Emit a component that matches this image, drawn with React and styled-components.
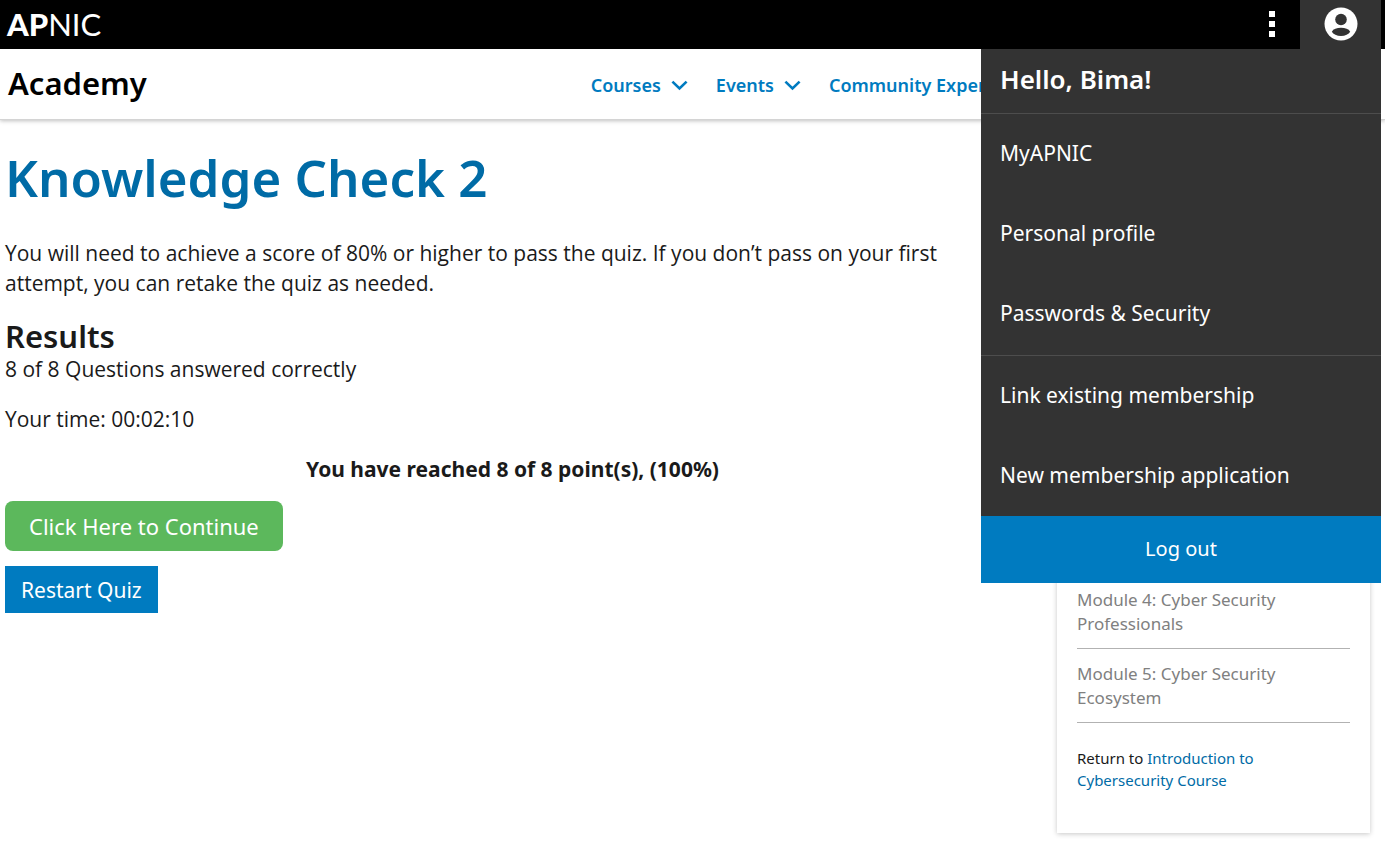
import React from "react";
import styled, { createGlobalStyle } from "styled-components";

const GlobalStyle = createGlobalStyle`
  * { box-sizing: border-box; }
  body {
    margin: 0;
    background: #fff;
    color: #1a1a1a;
    font-family: "Noto Sans", "Open Sans", sans-serif;
    font-size: 21px;
    line-height: 30px;
  }
  h1, h2, p, ul { margin: 0; padding: 0; }
  ul { list-style: none; }
  a { color: inherit; text-decoration: none; }
  button { border: 0; font-family: inherit; cursor: pointer; }
`;

const TopBar = styled.header`
  position: relative;
  z-index: 2;
  display: flex;
  align-items: flex-start;
  height: 49px;
  padding: 0 4px 0 7px;
  background: #000;
  color: #fff;
`;

const Logo = styled.a`
  margin-right: auto;
  font-family: Lato, sans-serif;
  font-size: 31px;
  line-height: 48px;
  font-weight: 400;
`;

const LogoBold = styled.span`
  font-weight: 900;
`;

const IconButton = styled.button`
  display: flex;
  align-items: center;
  justify-content: center;
  width: ${(p) => (p.$active ? 81 : 56)}px;
  height: 49px;
  padding: 0 0 2px;
  background: ${(p) => (p.$active ? "#333" : "transparent")};
  color: #fff;
`;

const AccountMenu = styled.div`
  position: absolute;
  top: 49px;
  right: 4px;
  width: 400px;
  background: #333;
`;

const Greeting = styled.p`
  height: 65px;
  padding: 0 19px;
  border-bottom: 1px solid #4d4d4d;
  font-size: 26px;
  line-height: 60px;
  font-weight: 600;
`;

const MenuGroup = styled.ul`
  & + & {
    margin-top: 1px;
    border-top: 1px solid #4d4d4d;
  }
`;

const MenuLink = styled.a`
  display: block;
  padding: 24px 19px 26px;
`;

const LogOut = styled.button`
  display: block;
  width: 100%;
  height: 67px;
  padding: 0 0 2px;
  background: #007bc0;
  color: #fff;
  font-size: 20px;
`;

const SiteBar = styled.div`
  display: flex;
  align-items: center;
  height: 71px;
  border-bottom: 1px solid #d4d4d4;
  box-shadow: 0 1px 4px rgba(0, 0, 0, 0.25);
`;

const Brand = styled.a`
  flex: 0 0 42%;
  padding: 0 0 2px 8px;
  color: #000;
  font-size: 31px;
  font-weight: 600;
`;

const Nav = styled.nav`
  display: flex;
  flex: 1;
  gap: 28px;
  padding: 2px 0 0 9px;
  overflow: hidden;
`;

const NavLink = styled.a`
  display: flex;
  align-items: center;
  gap: 10px;
  color: #007bc0;
  font-size: 18px;
  font-weight: 600;
  white-space: nowrap;
`;

const Page = styled.div`
  display: grid;
  grid-template-columns: minmax(0, 1fr) 313px;
  gap: 37px;
  align-items: start;
  padding: 0 15px 14px 5px;
`;

const Content = styled.main`
  padding-top: 25px;
`;

const Title = styled.h1`
  color: #006ba6;
  font-size: 51px;
  line-height: 64px;
  font-weight: 600;
`;

const BodyText = styled.p`
  font-family: "Open Sans", "Noto Sans", sans-serif;
`;

const Intro = styled(BodyText)`
  margin-top: 29px;
  padding-right: 40px;
`;

const ResultsTitle = styled.h2`
  margin-top: 20px;
  font-size: 31px;
  line-height: 36px;
  font-weight: 600;
`;

const ResultLine = styled(BodyText)`
  margin-bottom: 20px;
`;

const Score = styled.p`
  margin-bottom: 17px;
  font-weight: 700;
  text-align: center;
`;

const Actions = styled.div`
  display: flex;
  flex-direction: column;
  align-items: flex-start;
  gap: 15px;
`;

const ActionButton = styled.button`
  height: ${(p) => (p.$primary ? 50 : 47)}px;
  padding: 0 ${(p) => (p.$primary ? 24 : 16)}px;
  border-radius: ${(p) => (p.$primary ? 8 : 0)}px;
  background: ${(p) => (p.$primary ? "#5cb85c" : "#007bc0")};
  color: #fff;
  font-size: ${(p) => (p.$primary ? 22 : 21)}px;
  white-space: nowrap;
`;

const Sidebar = styled.aside`
  margin-top: 448px;
  padding: 20px 20px 42px;
  background: #fff;
  box-shadow: 0 1px 5px rgba(0, 0, 0, 0.22);
`;

const ModuleItem = styled.li`
  padding-bottom: 12px;
  border-bottom: 1px solid #b2b2b2;
  color: #808080;
  font-size: 17px;
  line-height: 24px;
  & + & { padding-top: 13px; }
`;

const ReturnNote = styled.p`
  margin-top: 24px;
  font-size: 15px;
  line-height: 22px;
`;

const ReturnLink = styled.a`
  color: #006ba6;
`;

const Chevron = () => (
  <svg width="17" height="11" viewBox="0 0 17 11" fill="none" aria-hidden="true">
    <path d="M1.4 1.6 8.5 8.5l7.100-6.900" stroke="currentColor" strokeWidth="2.6" />
  </svg>
);

const Dots = () => (
  <svg width="6" height="26" viewBox="0 0 6 26" fill="currentColor" aria-hidden="true">
    <path d="M0 0h6v6H0zM0 10h6v6H0zM0 20h6v6H0z" />
  </svg>
);

const Person = () => (
  <svg width="34" height="34" viewBox="0 0 34 34" aria-hidden="true">
    <circle cx="17" cy="17" r="16.5" fill="#fff" />
    <circle cx="17" cy="12.5" r="5.8" fill="#333" />
    <path d="M7.800 24.700c1.500-2.800 5-3.900 9.200-3.900s7.700 1.100 9.200 3.900c-1.500 2.500-5 4.200-9.200 4.200s-7.700-1.700-9.200-4.200z" fill="#333" />
  </svg>
);

const profileLinks = ["MyAPNIC", "Personal profile", "Passwords & Security"];
const membershipLinks = ["Link existing membership", "New membership application"];
const modules = [
  "Module 4: Cyber Security Professionals",
  "Module 5: Cyber Security Ecosystem",
];

const LinkGroup = ({ items }) => (
  <MenuGroup>
    {items.map((item) => (
      <li key={item}>
        <MenuLink href="#">{item}</MenuLink>
      </li>
    ))}
  </MenuGroup>
);

export default function App() {
  return (
    <>
      <GlobalStyle />
      <TopBar>
        <Logo href="#"><LogoBold>AP</LogoBold>NIC</Logo>
        <IconButton aria-label="More"><Dots /></IconButton>
        <IconButton $active aria-label="Account"><Person /></IconButton>
        <AccountMenu>
          <Greeting>Hello, Bima!</Greeting>
          <LinkGroup items={profileLinks} />
          <LinkGroup items={membershipLinks} />
          <LogOut>Log out</LogOut>
        </AccountMenu>
      </TopBar>
      <SiteBar>
        <Brand href="#">Academy</Brand>
        <Nav>
          <NavLink href="#">Courses<Chevron /></NavLink>
          <NavLink href="#">Events<Chevron /></NavLink>
          <NavLink href="#">Community Experts</NavLink>
        </Nav>
      </SiteBar>
      <Page>
        <Content>
          <Title>Knowledge Check 2</Title>
          <Intro>
            You will need to achieve a score of 80% or higher to pass the quiz. If you don’t pass on your first
            attempt, you can retake the quiz as needed.
          </Intro>
          <ResultsTitle>Results</ResultsTitle>
          <ResultLine>8 of 8 Questions answered correctly</ResultLine>
          <ResultLine>Your time: 00:02:10</ResultLine>
          <Score>You have reached 8 of 8 point(s), (100%)</Score>
          <Actions>
            <ActionButton $primary>Click Here to Continue</ActionButton>
            <ActionButton>Restart Quiz</ActionButton>
          </Actions>
        </Content>
        <Sidebar>
          <ul>
            {modules.map((m) => <ModuleItem key={m}>{m}</ModuleItem>)}
          </ul>
          <ReturnNote>
            Return to <ReturnLink href="#">Introduction to Cybersecurity Course</ReturnLink>
          </ReturnNote>
        </Sidebar>
      </Page>
    </>
  );
}
